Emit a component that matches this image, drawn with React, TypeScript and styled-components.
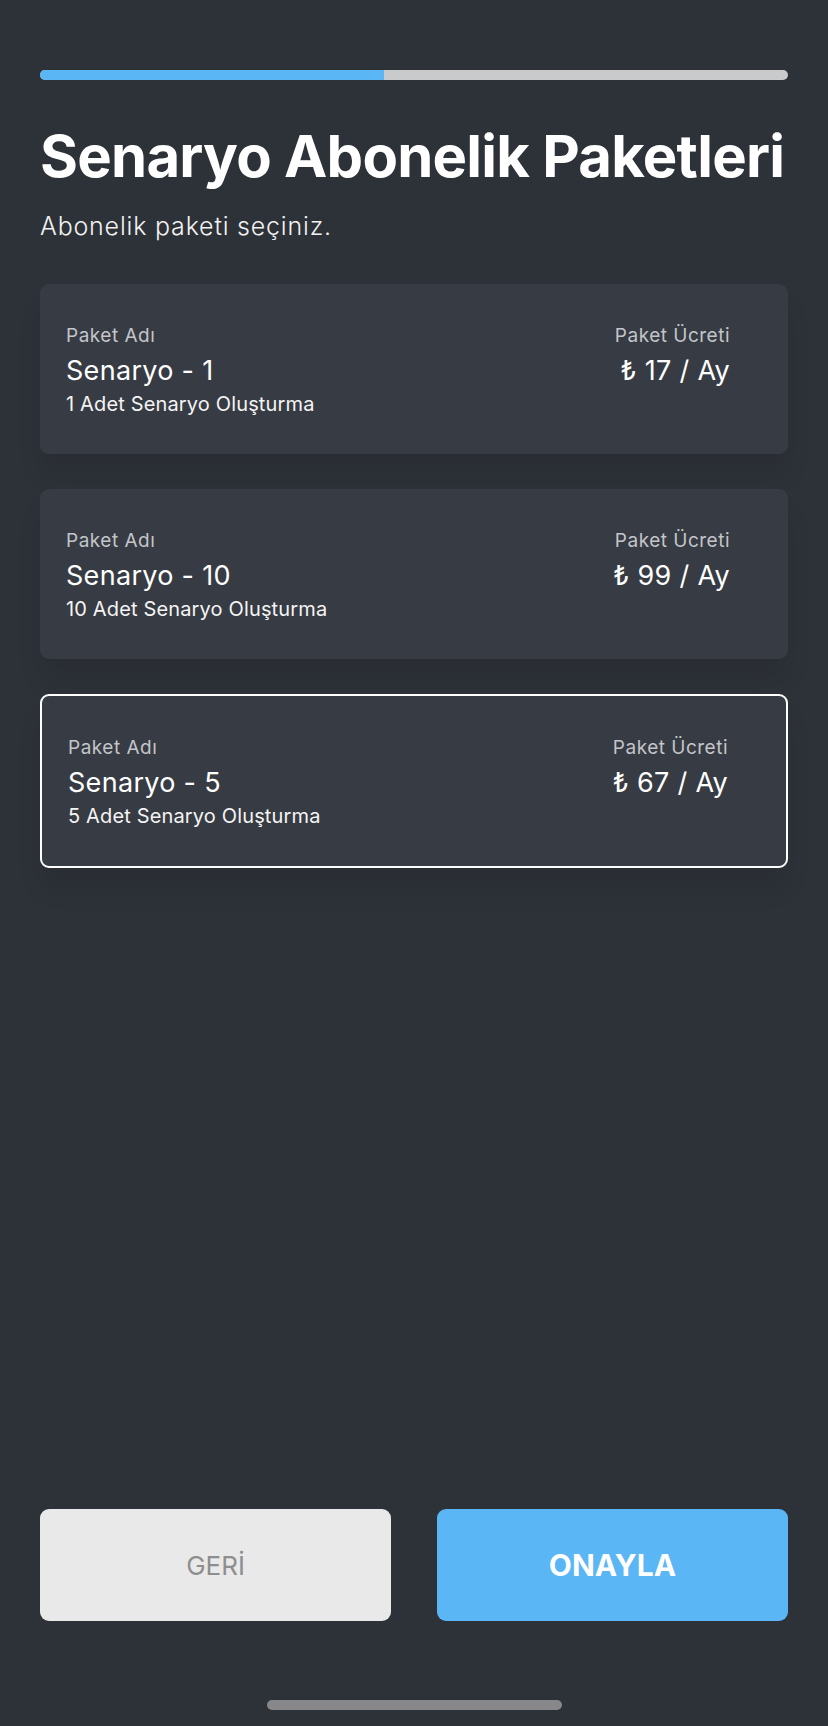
import React from "react";
import styled, { createGlobalStyle } from "styled-components";

const GlobalStyle = createGlobalStyle`
  html, body {
    margin: 0;
    padding: 0;
    background: #2d3138;
  }
  * { box-sizing: border-box; }
`;

const Page = styled.div`
  min-height: 1726px;
  display: flex;
  flex-direction: column;
  padding: 70px 40px 16px;
  background: #2d3138;
  font-family: Inter, "Noto Sans", sans-serif;
  color: #ffffff;
`;

const Progress = styled.div`
  height: 10px;
  border-radius: 5px;
  background: #c9cacc;
  overflow: hidden;
  display: flex;
`;

const ProgressFill = styled.div`
  height: 100%;
  background: #5ab6f5;
`;

const Title = styled.h1`
  margin: 47px 0 0;
  font-family: Inter, sans-serif;
  font-weight: 700;
  font-size: 58px;
  line-height: 58px;
  letter-spacing: -0.75px;
  white-space: nowrap;
`;

const Subtitle = styled.p`
  margin: 26px 0 0;
  font-family: Inter, sans-serif;
  font-weight: 300;
  font-size: 25px;
  line-height: 30px;
  letter-spacing: 0.8px;
  color: #f2f2f2;
`;

const CardList = styled.div`
  margin-top: 43px;
  display: flex;
  flex-direction: column;
  gap: 35px;
`;

const Card = styled.div<{ $selected?: boolean }>`
  display: grid;
  grid-template-columns: 1fr auto;
  padding: 41px 58px 38px 26px;
  border-radius: 9px;
  background: #373b43;
  border: ${(p) => (p.$selected ? "2px solid #ffffff" : "0")};
  box-shadow: 0 22px 26px rgba(0, 0, 0, 0.07);
`;

const Column = styled.div<{ $right?: boolean }>`
  display: flex;
  flex-direction: column;
  align-items: ${(p) => (p.$right ? "flex-end" : "flex-start")};
`;

const Label = styled.div`
  font-size: 19px;
  line-height: 22px;
  letter-spacing: 0.5px;
  color: #c3c5c9;
  font-weight: 400;
`;

const Name = styled.div`
  margin-top: 8px;
  font-size: 27px;
  line-height: 32px;
  letter-spacing: 0.3px;
  font-weight: 400;
  color: #ffffff;
`;

const Desc = styled.div`
  margin-top: 5px;
  font-size: 20px;
  line-height: 24px;
  letter-spacing: 0.15px;
  color: #f4f4f4;
`;

const Price = styled.div`
  margin-top: 8px;
  font-size: 27px;
  line-height: 32px;
  letter-spacing: 0.3px;
  font-weight: 400;
  color: #ffffff;
`;

const Spacer = styled.div`
  flex: 1;
`;

const ButtonRow = styled.div`
  display: grid;
  grid-template-columns: 1fr 1fr;
  gap: 46px;
`;

const Button = styled.button<{ $primary?: boolean }>`
  height: 112px;
  border: 0;
  border-radius: 9px;
  background: ${(p) => (p.$primary ? "#5ab6f5" : "#e9e9e9")};
  color: ${(p) => (p.$primary ? "#ffffff" : "#8e8e8e")};
  font-family: Inter, sans-serif;
  font-size: ${(p) => (p.$primary ? "30px" : "26px")};
  font-weight: ${(p) => (p.$primary ? 700 : 400)};
  cursor: pointer;
`;

const HomeIndicator = styled.div`
  margin: 79px auto 0;
  width: 295px;
  height: 10px;
  border-radius: 5px;
  background: #88888b;
`;

const packages = [
  { name: "Senaryo - 1", desc: "1 Adet Senaryo Oluşturma", price: "₺ 17 / Ay" },
  { name: "Senaryo - 10", desc: "10 Adet Senaryo Oluşturma", price: "₺ 99 / Ay" },
  { name: "Senaryo - 5", desc: "5 Adet Senaryo Oluşturma", price: "₺ 67 / Ay", selected: true },
];

export default function App() {
  return (
    <>
      <GlobalStyle />
      <Page>
        <Progress>
          <ProgressFill style={{ width: "46%" }} />
        </Progress>
        <Title>Senaryo Abonelik Paketleri</Title>
        <Subtitle>Abonelik paketi seçiniz.</Subtitle>
        <CardList>
          {packages.map((p) => (
            <Card key={p.name} $selected={p.selected}>
              <Column>
                <Label>Paket Adı</Label>
                <Name>{p.name}</Name>
                <Desc>{p.desc}</Desc>
              </Column>
              <Column $right>
                <Label>Paket Ücreti</Label>
                <Price>{p.price}</Price>
              </Column>
            </Card>
          ))}
        </CardList>
        <Spacer />
        <ButtonRow>
          <Button>GERİ</Button>
          <Button $primary>ONAYLA</Button>
        </ButtonRow>
        <HomeIndicator />
      </Page>
    </>
  );
}
